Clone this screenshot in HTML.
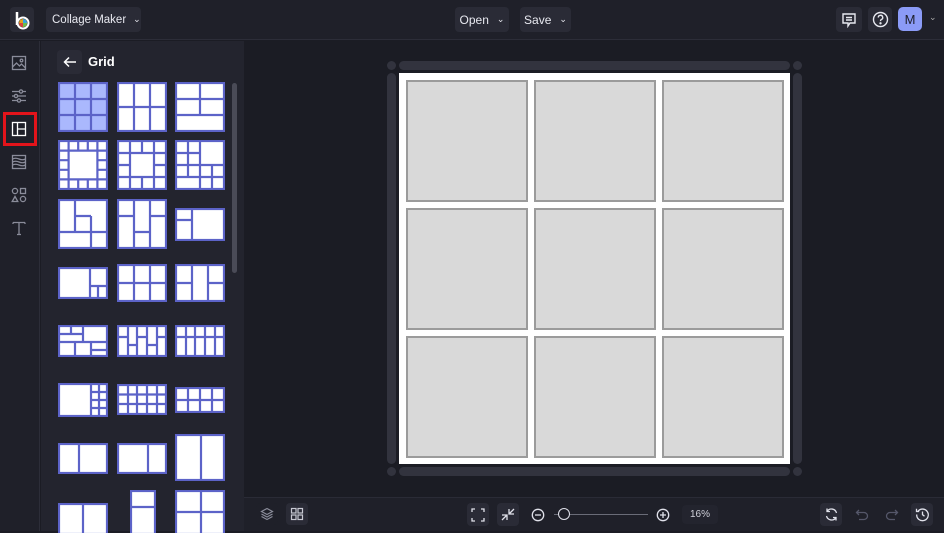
<!DOCTYPE html>
<html><head><meta charset="utf-8"><style>
*{margin:0;padding:0;box-sizing:border-box}
body{width:944px;height:531px;overflow:hidden;background:#1b1c24;font-family:"Liberation Sans",sans-serif;position:relative;color:#e6e7ee}
.a{position:absolute}
.btn{position:absolute;background:#2a2b36;border-radius:4px;font-size:12px;color:#e8e9f0;display:flex;align-items:center;justify-content:center;white-space:nowrap}
svg.t{position:absolute}
svg.t rect{fill:#fff;stroke:#5c63c8;stroke-width:2.2}
svg.t path{stroke:#5c63c8;stroke-width:2.2;fill:none}
.rail{position:absolute;background:#32333e;border-radius:5px}
.cell{position:absolute;width:122px;height:122px;background:#d9d9d9;border:2px solid #9b9b9b}
.ic{position:absolute;stroke:#8a8c9a;fill:none;stroke-width:1.3}
</style></head><body>
<div class="a" style="left:0;top:0;width:944px;height:40px;background:#1f2029;border-bottom:1px solid #2c2d38"></div>
<div class="btn" style="left:10px;top:7px;width:24px;height:25px;background:#2a2b36">
<svg width="18" height="20" viewBox="0 0 18 20"><path d="M4 2v13" stroke="#fff" stroke-width="2.5"/><circle cx="10" cy="13" r="5.5" fill="none" stroke="#fff" stroke-width="2"/><circle cx="10" cy="13" r="4" fill="#e3a11c"/><path d="M10 9a4 4 0 0 1 4 4h-4z" fill="#35a4e0"/><path d="M10 13h-4a4 4 0 0 0 4 4z" fill="#d8433e"/><path d="M10 13v4a4 4 0 0 0 4-4z" fill="#6cbf4a"/></svg></div>
<div class="btn" style="left:46px;top:7px;width:95px;height:25px;justify-content:flex-start;padding-left:6px;font-size:11.5px">Collage Maker <span style="margin-left:7px;font-size:9px">&#8964;</span></div>
<div class="btn" style="left:455px;top:7px;width:54px;height:25px">Open <span style="margin-left:8px;font-size:9px">&#8964;</span></div>
<div class="btn" style="left:520px;top:7px;width:51px;height:25px">Save <span style="margin-left:8px;font-size:9px">&#8964;</span></div>
<div class="btn" style="left:836px;top:7px;width:26px;height:25px"><svg width="16" height="16" viewBox="0 0 16 16" fill="none" stroke="#e8e9f0" stroke-width="1.4"><path d="M2 2h12v9H9l-2 3v-3H2z"/><path d="M5 5.5h6M5 8h6"/></svg></div>
<div class="btn" style="left:868px;top:7px;width:24px;height:25px"><svg width="17" height="17" viewBox="0 0 17 17" fill="none" stroke="#e8e9f0" stroke-width="1.4"><circle cx="8.5" cy="8.5" r="7"/><path d="M6.3 6.5a2.2 2.2 0 1 1 3 2c-.7.3-.8.8-.8 1.6"/><circle cx="8.5" cy="12.3" r=".5" fill="#e8e9f0"/></svg></div>
<div class="btn" style="left:898px;top:7px;width:24px;height:24px;background:#8b9bf7;border-radius:5px;color:#1c1d28;font-size:13px">M</div>
<div class="a" style="left:929px;top:12px;font-size:9px;color:#aaa">&#8964;</div>
<div class="a" style="left:0;top:41px;width:40px;height:490px;background:#1f2029;border-right:1px solid #2c2d38"></div>
<svg class="ic" style="left:11px;top:55px" width="16" height="16" viewBox="0 0 16 16"><rect x="1.5" y="1.5" width="13" height="13"/><circle cx="10.5" cy="5.5" r="1.3"/><path d="M1.5 12l4-4 3 3 2-2 4 4"/></svg>
<svg class="ic" style="left:11px;top:88px" width="16" height="16" viewBox="0 0 16 16"><path d="M1 3.5h14M1 8h14M1 12.5h14"/><circle cx="10" cy="3.5" r="1.6" fill="#1f2029"/><circle cx="5" cy="8" r="1.6" fill="#1f2029"/><circle cx="8" cy="12.5" r="1.6" fill="#1f2029"/></svg>
<div class="a" style="left:3px;top:112px;width:34px;height:34px;border:3px solid #e3141b"></div>
<svg class="ic" style="left:11px;top:121px;stroke:#fff" width="16" height="16" viewBox="0 0 16 16"><rect x="1.5" y="1.5" width="13" height="13"/><path d="M6.5 1.5v13M6.5 8h8"/></svg>
<svg class="ic" style="left:11px;top:154px" width="16" height="16" viewBox="0 0 16 16"><rect x="1.5" y="1.5" width="13" height="13"/><path d="M1.5 5q3-1.5 6.5 0t6.5 0M1.5 8q3-1.5 6.5 0t6.5 0M1.5 11q3-1.5 6.5 0t6.5 0"/></svg>
<svg class="ic" style="left:11px;top:187px" width="16" height="16" viewBox="0 0 16 16"><circle cx="4" cy="4" r="2.6"/><rect x="9.5" y="1.5" width="5" height="5"/><path d="M4 9.5l2.8 5H1.2z"/><circle cx="12" cy="12" r="2.6"/></svg>
<svg class="ic" style="left:11px;top:220px" width="16" height="16" viewBox="0 0 16 16"><path d="M2 2.5h12M8 2.5v12M6 14.5h4M2 2.5v1.5M14 2.5v1.5"/></svg>
<div class="a" style="left:41px;top:41px;width:203px;height:490px;background:#23242e"></div>
<div class="btn" style="left:57px;top:50px;width:25px;height:24px"><svg width="14" height="12" viewBox="0 0 14 12" fill="none" stroke="#fff" stroke-width="1.5"><path d="M13 6H2M6 1.5L1.5 6 6 10.5"/></svg></div>
<div class="a" style="left:88px;top:54px;font-size:13px;font-weight:bold;color:#fff">Grid</div>
<div class="a" style="left:232px;top:83px;width:5px;height:190px;background:#4a4b57;border-radius:3px"></div>

<svg class="t" style="left:58px;top:82px" width="50" height="50"><rect x="1" y="1" width="48" height="48" style="fill:#aab8fd"/><path d="M17 1v48M33 1v48M1 17h48M1 33h48"/></svg>
<svg class="t" style="left:117px;top:82px" width="50" height="50"><rect x="1" y="1" width="48" height="48"/><path d="M17 1v48M33 1v48M1 25h48"/></svg>
<svg class="t" style="left:175px;top:82px" width="50" height="50"><rect x="1" y="1" width="48" height="48"/><path d="M1 17h48M1 33h48M25 1v32"/></svg>

<svg class="t" style="left:58px;top:140px" width="50" height="50"><rect x="1" y="1" width="48" height="48"/><path d="M1 10.6h48M1 39.4h48M10.6 1v48M39.4 1v48M20.2 1v9.6M29.8 1v9.6M20.2 39.4v9.6M29.8 39.4v9.6M1 20.2h9.6M1 29.8h9.6M39.4 20.2h9.6M39.4 29.8h9.6"/></svg>
<svg class="t" style="left:117px;top:140px" width="50" height="50"><rect x="1" y="1" width="48" height="48"/><path d="M1 13h48M1 37h48M13 1v48M37 1v48M25 1v12M25 37v12M1 25h12M37 25h12"/></svg>
<svg class="t" style="left:175px;top:140px" width="50" height="50"><rect x="1" y="1" width="48" height="48"/><path d="M1 13h24M1 25h48M1 37h24M13 1v36M25 1v48M37 25v24M25 37h24"/></svg>

<svg class="t" style="left:58px;top:199px" width="50" height="50"><rect x="1" y="1" width="48" height="48"/><path d="M17 1v32M1 33h48M17 17h16M33 17v32"/></svg>
<svg class="t" style="left:117px;top:199px" width="50" height="50"><rect x="1" y="1" width="48" height="48"/><path d="M17 1v48M33 1v48M1 17h16M17 33h16M33 17h16"/></svg>
<svg class="t" style="left:175px;top:208px" width="50" height="33"><rect x="1" y="1" width="48" height="31"/><path d="M17 1v31M1 12h16"/></svg>

<svg class="t" style="left:58px;top:267px" width="50" height="32"><rect x="1" y="1" width="48" height="30"/><path d="M32 1v30M32 19h17M40 19v12"/></svg>
<svg class="t" style="left:117px;top:264px" width="50" height="38"><rect x="1" y="1" width="48" height="36"/><path d="M17 1v36M33 1v36M1 19h48"/></svg>
<svg class="t" style="left:175px;top:264px" width="50" height="38"><rect x="1" y="1" width="48" height="36"/><path d="M17 1v36M33 1v36M1 19h16M33 19h16"/></svg>

<svg class="t" style="left:58px;top:325px" width="50" height="32"><rect x="1" y="1" width="48" height="30"/><path d="M1 17h48M25 1v16M1 9h24M13 1v8M17 17v14M33 17v14M33 25h16"/></svg>
<svg class="t" style="left:117px;top:325px" width="50" height="32"><rect x="1" y="1" width="48" height="30"/><path d="M11 1v30M20 1v30M30 1v30M40 1v30M1 12h10M20 12h10M40 12h9M11 20h9M30 20h10"/></svg>
<svg class="t" style="left:175px;top:325px" width="50" height="32"><rect x="1" y="1" width="48" height="30"/><path d="M11 1v30M20 1v30M30 1v30M40 1v30M1 12h48"/></svg>

<svg class="t" style="left:58px;top:383px" width="50" height="34"><rect x="1" y="1" width="48" height="32"/><path d="M33 1v32M41 1v32M33 9h16M33 17h16M33 25h16"/></svg>
<svg class="t" style="left:117px;top:384px" width="50" height="31"><rect x="1" y="1" width="48" height="29"/><path d="M11 1v29M20 1v29M30 1v29M40 1v29M1 10.5h48M1 20h48"/></svg>
<svg class="t" style="left:175px;top:387px" width="50" height="26"><rect x="1" y="1" width="48" height="24"/><path d="M13 1v24M25 1v24M37 1v24M1 13h48"/></svg>

<svg class="t" style="left:58px;top:443px" width="50" height="31"><rect x="1" y="1" width="48" height="29"/><path d="M21 1v29"/></svg>
<svg class="t" style="left:117px;top:443px" width="50" height="31"><rect x="1" y="1" width="48" height="29"/><path d="M31 1v29"/></svg>
<svg class="t" style="left:175px;top:434px" width="50" height="47"><rect x="1" y="1" width="48" height="45"/><path d="M26 1v45"/></svg>

<svg class="t" style="left:58px;top:503px" width="50" height="30"><rect x="1" y="1" width="48" height="30"/><path d="M25 1v30"/></svg>
<svg class="t" style="left:130px;top:490px" width="26" height="43"><rect x="1" y="1" width="24" height="43"/><path d="M1 17h24"/></svg>
<svg class="t" style="left:175px;top:490px" width="50" height="43"><rect x="1" y="1" width="48" height="43"/><path d="M26 1v43M1 22h48"/></svg>

<div class="rail" style="left:399px;top:61px;width:391px;height:9px"></div>
<div class="rail" style="left:399px;top:467px;width:391px;height:9px"></div>
<div class="rail" style="left:387px;top:73px;width:9px;height:391px"></div>
<div class="rail" style="left:793px;top:73px;width:9px;height:391px"></div>
<div class="rail" style="left:387px;top:61px;width:9px;height:9px;border-radius:50%"></div>
<div class="rail" style="left:793px;top:61px;width:9px;height:9px;border-radius:50%"></div>
<div class="rail" style="left:387px;top:467px;width:9px;height:9px;border-radius:50%"></div>
<div class="rail" style="left:793px;top:467px;width:9px;height:9px;border-radius:50%"></div>
<div class="a" style="left:399px;top:73px;width:391px;height:391px;background:#fff"></div>
<div class="cell" style="left:406px;top:80px"></div><div class="cell" style="left:534px;top:80px"></div><div class="cell" style="left:662px;top:80px"></div>
<div class="cell" style="left:406px;top:208px"></div><div class="cell" style="left:534px;top:208px"></div><div class="cell" style="left:662px;top:208px"></div>
<div class="cell" style="left:406px;top:336px"></div><div class="cell" style="left:534px;top:336px"></div><div class="cell" style="left:662px;top:336px"></div>

<div class="a" style="left:244px;top:497px;width:700px;height:34px;background:#1f2029;border-top:1px solid #2a2b36"></div>
<div class="btn" style="left:256px;top:503px;width:22px;height:22px;background:#1f2029"><svg width="14" height="14" viewBox="0 0 14 14" fill="none" stroke="#8a8c9a" stroke-width="1.2"><path d="M7 1.5l5.5 3L7 7.5 1.5 4.5z"/><path d="M1.5 7L7 10l5.5-3M1.5 9.5L7 12.5l5.5-3"/></svg></div>
<div class="btn" style="left:286px;top:503px;width:22px;height:22px"><svg width="14" height="14" viewBox="0 0 14 14" fill="none" stroke="#c8c9d2" stroke-width="1.2"><rect x="1.5" y="1.5" width="4.5" height="4.5"/><rect x="8" y="1.5" width="4.5" height="4.5"/><rect x="1.5" y="8" width="4.5" height="4.5"/><rect x="8" y="8" width="4.5" height="4.5"/></svg></div>
<div class="btn" style="left:467px;top:503px;width:22px;height:23px"><svg width="14" height="14" viewBox="0 0 14 14" fill="none" stroke="#e0e1ea" stroke-width="1.3"><path d="M1 4V1h3M10 1h3v3M13 10v3h-3M4 13H1v-3"/></svg></div>
<div class="btn" style="left:497px;top:503px;width:22px;height:23px"><svg width="14" height="14" viewBox="0 0 14 14" fill="none" stroke="#e0e1ea" stroke-width="1.3"><path d="M1 7h5v5M1 12l5-5M8 1v5h5M8 6l5-5"/></svg></div>
<svg class="a" style="left:531px;top:508px" width="14" height="14" viewBox="0 0 14 14" fill="none" stroke="#e0e1ea" stroke-width="1.3"><circle cx="7" cy="7" r="5.7"/><path d="M4 7h6"/></svg>
<div class="a" style="left:554px;top:514px;width:94px;height:1px;background:#6a6c78"></div>
<div class="a" style="left:558px;top:508px;width:12px;height:12px;border:1.5px solid #e0e1ea;border-radius:50%;background:#1f2029"></div>
<svg class="a" style="left:656px;top:508px" width="14" height="14" viewBox="0 0 14 14" fill="none" stroke="#e0e1ea" stroke-width="1.3"><circle cx="7" cy="7" r="5.7"/><path d="M4 7h6M7 4v6"/></svg>
<div class="btn" style="left:682px;top:505px;width:36px;height:19px;background:#23242e;font-size:10px;color:#d0d1da">16%</div>
<div class="btn" style="left:820px;top:503px;width:22px;height:23px"><svg width="15" height="15" viewBox="0 0 15 15" fill="none" stroke="#e0e1ea" stroke-width="1.3"><path d="M12.5 6A5.2 5.2 0 0 0 3 4.5M2.5 9a5.2 5.2 0 0 0 9.5 1.5M3 1.5v3h3M12 13.5v-3H9"/></svg></div>
<svg class="a" style="left:855px;top:508px" width="14" height="14" viewBox="0 0 14 14" fill="none" stroke="#55576a" stroke-width="1.3"><path d="M4 2L1.5 4.5 4 7M1.5 4.5H9a3.5 3.5 0 0 1 0 7H4"/></svg>
<svg class="a" style="left:885px;top:508px" width="14" height="14" viewBox="0 0 14 14" fill="none" stroke="#55576a" stroke-width="1.3"><path d="M10 2l2.5 2.5L10 7M12.5 4.5H5a3.5 3.5 0 0 0 0 7h5"/></svg>
<div class="btn" style="left:911px;top:503px;width:22px;height:23px"><svg width="15" height="15" viewBox="0 0 15 15" fill="none" stroke="#e0e1ea" stroke-width="1.3"><path d="M3 4.2A5.8 5.8 0 1 1 1.7 7.5M1.5 1.8v2.7h2.7M7.5 4.5v3.2l2 1.5"/></svg></div>
</body></html>
